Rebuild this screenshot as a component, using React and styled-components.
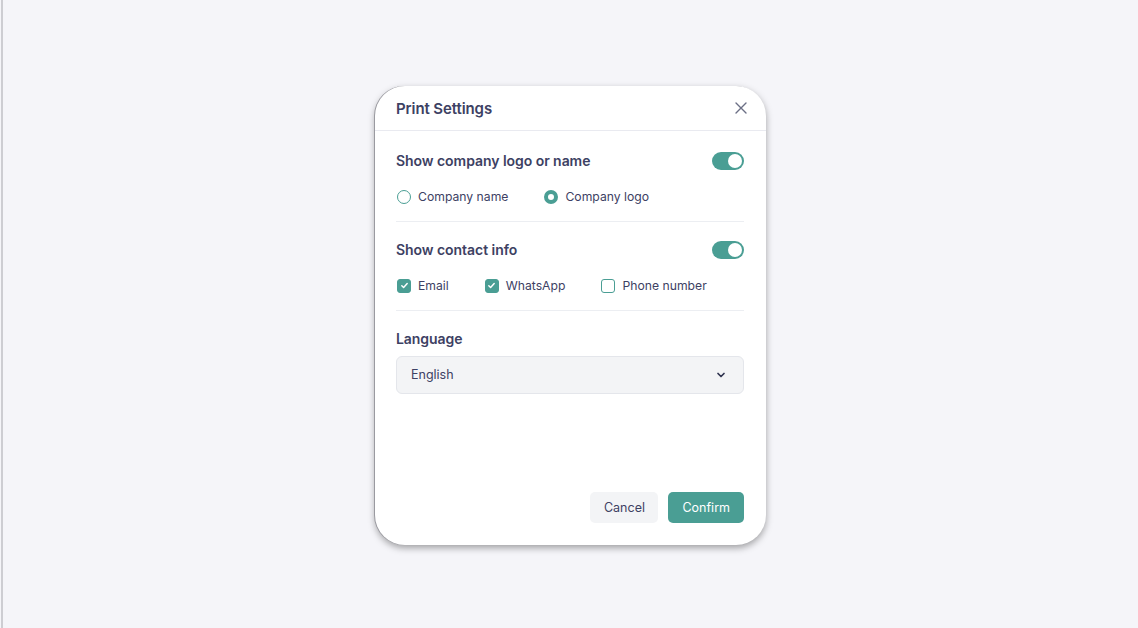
import { useState } from "react";
import styled, { createGlobalStyle } from "styled-components";

const GlobalStyle = createGlobalStyle`
  * { box-sizing: border-box; }
  html, body { margin: 0; padding: 0; }
  body {
    font-family: "Inter", "Open Sans", sans-serif;
    background: #f5f5f9;
    color: #3d4163;
  }
`;

const TEAL = "#4a9e94";

const PrintSettings = () => {
  const [showBrand, setShowBrand] = useState(true);
  const [brand, setBrand] = useState("logo");
  const [showContact, setShowContact] = useState(true);
  const [contact, setContact] = useState({ email: true, whatsapp: true, phone: false });

  const toggleContact = (key) => setContact((c) => ({ ...c, [key]: !c[key] }));

  return (
    <Page>
      <GlobalStyle />
      <Modal>
        <Header>
          <Title>Print Settings</Title>
          <CloseButton aria-label="Close">
            <svg width="12" height="12" viewBox="0 0 12 12">
              <path d="M1 1l10 10M11 1L1 11" stroke="#6b6f85" strokeWidth="1.4" strokeLinecap="round" />
            </svg>
          </CloseButton>
        </Header>

        <Body>
          <Section>
            <SectionHead>
              <Heading>Show company logo or name</Heading>
              <Toggle $on={showBrand} onClick={() => setShowBrand(!showBrand)} />
            </SectionHead>
            <OptionRow>
              <Option onClick={() => setBrand("name")}>
                <Radio $checked={brand === "name"} />
                Company name
              </Option>
              <Option onClick={() => setBrand("logo")}>
                <Radio $checked={brand === "logo"} />
                Company logo
              </Option>
            </OptionRow>
          </Section>

          <Divider />

          <Section>
            <SectionHead>
              <Heading>Show contact info</Heading>
              <Toggle $on={showContact} onClick={() => setShowContact(!showContact)} />
            </SectionHead>
            <OptionRow>
              {[
                ["email", "Email"],
                ["whatsapp", "WhatsApp"],
                ["phone", "Phone number"],
              ].map(([key, label]) => (
                <Option key={key} onClick={() => toggleContact(key)}>
                  <Checkbox $checked={contact[key]}>
                    {contact[key] && (
                      <svg width="9" height="9" viewBox="0 0 10 10">
                        <path d="M2 5.2l2 2 4-4.4" fill="none" stroke="#fff" strokeWidth="1.6" strokeLinecap="round" strokeLinejoin="round" />
                      </svg>
                    )}
                  </Checkbox>
                  {label}
                </Option>
              ))}
            </OptionRow>
          </Section>

          <Divider />

          <Field>
            <Heading>Language</Heading>
            <Select>
              <span>English</span>
              <svg width="10" height="10" viewBox="0 0 10 10">
                <path d="M2 3.5l3 3 3-3" fill="none" stroke="#2f3350" strokeWidth="1.7" strokeLinecap="round" strokeLinejoin="round" />
              </svg>
            </Select>
          </Field>
        </Body>

        <Footer>
          <Button>Cancel</Button>
          <Button $primary>Confirm</Button>
        </Footer>
      </Modal>
    </Page>
  );
};

const Page = styled.div`
  min-height: 100vh;
  padding-top: 2px;
  display: flex;
  align-items: center;
  justify-content: center;
  border-left: 2px solid #cdcdd2;
  margin-left: 1px;
`;

const Modal = styled.div`
  width: 391px;
  height: 459px;
  background: #fff;
  border-radius: 30px;
  box-shadow: -1px 0 0 #9a9aa0, 0 3px 7px rgba(0, 0, 0, 0.35);
  display: flex;
  flex-direction: column;
  overflow: hidden;
`;

const Header = styled.div`
  height: 45px;
  padding: 1px 22px 0 21px;
  display: flex;
  align-items: center;
  justify-content: space-between;
  border-bottom: 1px solid #e9eaf0;
`;

const Title = styled.h2`
  margin: 0;
  font-size: 15px;
  font-weight: 600;
  color: #3d4163;
  letter-spacing: -0.1px;
`;

const CloseButton = styled.button`
  border: 0;
  background: none;
  padding: 0;
  width: 12px;
  height: 12px;
  display: flex;
  align-items: center;
  justify-content: center;
  cursor: pointer;
  margin-right: -3px;
`;

const Body = styled.div`
  padding: 20px 22px 0 21px;
  display: flex;
  flex-direction: column;
`;

const Section = styled.div`
  display: flex;
  flex-direction: column;
  gap: 17px;
`;

const SectionHead = styled.div`
  height: 20px;
  display: flex;
  align-items: center;
  justify-content: space-between;
`;

const Heading = styled.div`
  font-size: 14px;
  font-weight: 600;
  line-height: 20px;
  color: #3d4163;
  letter-spacing: -0.05px;
`;

const Toggle = styled.button`
  width: 32px;
  height: 18px;
  border: 0;
  padding: 0;
  border-radius: 9px;
  background: ${(p) => (p.$on ? TEAL : "#d5d7de")};
  position: relative;
  cursor: pointer;

  &::after {
    content: "";
    position: absolute;
    top: 2px;
    left: ${(p) => (p.$on ? "16px" : "2px")};
    width: 14px;
    height: 14px;
    border-radius: 50%;
    background: #fff;
  }
`;

const OptionRow = styled.div`
  height: 18px;
  display: flex;
  align-items: center;
  gap: 35px;
`;

const Option = styled.label`
  display: flex;
  align-items: center;
  gap: 7px;
  font-size: 12.2px;
  color: #3d4163;
  cursor: pointer;
  margin-left: 1px;
`;

const Radio = styled.span`
  width: 14px;
  height: 14px;
  border-radius: 50%;
  border: ${(p) => (p.$checked ? `4px solid ${TEAL}` : `1.5px solid ${TEAL}`)};
  background: #fff;
`;

const Checkbox = styled.span`
  width: 14px;
  height: 14px;
  border-radius: 3px;
  border: 1.5px solid ${TEAL};
  background: ${(p) => (p.$checked ? TEAL : "#fff")};
  display: flex;
  align-items: center;
  justify-content: center;
`;

const Divider = styled.hr`
  border: 0;
  border-top: 1px solid #eceef2;
  margin: 15px 0 18px;
`;

const Field = styled.div`
  display: flex;
  flex-direction: column;
  gap: 7px;
`;

const Select = styled.div`
  height: 38px;
  border-radius: 6px;
  border: 1px solid #e4e6eb;
  background: #f3f4f6;
  padding: 0 17px 0 14px;
  display: flex;
  align-items: center;
  justify-content: space-between;
  font-size: 12.5px;
  color: #3d4163;
`;

const Footer = styled.div`
  margin-top: auto;
  padding: 0 22px 22px 21px;
  display: flex;
  justify-content: flex-end;
  gap: 10px;
`;

const Button = styled.button`
  height: 31px;
  padding: 0 ${(p) => (p.$primary ? "14px" : "13.5px")};
  border: 0;
  border-radius: 5px;
  font-family: inherit;
  font-size: 12.5px;
  cursor: pointer;
  color: ${(p) => (p.$primary ? "#fff" : "#3d4163")};
  background: ${(p) => (p.$primary ? TEAL : "#f3f4f6")};
`;

export default PrintSettings;
